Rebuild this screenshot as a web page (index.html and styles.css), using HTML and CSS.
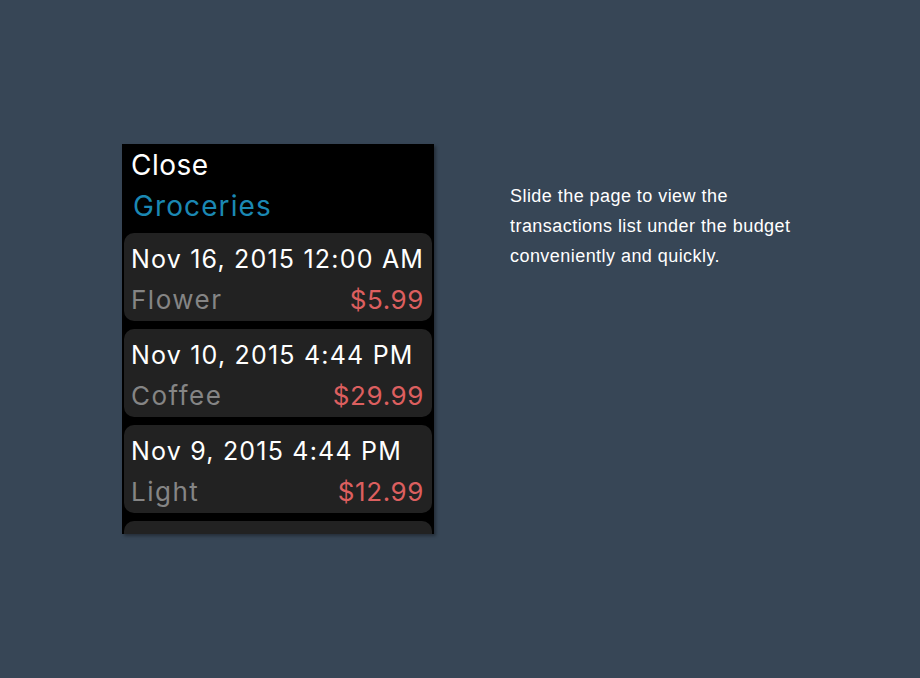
FILE: index.html
```html
<!DOCTYPE html>
<html>
<head>
<meta charset="utf-8">
<link rel="stylesheet" href="styles.css">
</head>
<body>
<div class="page">
  <div class="watch">
    <div class="close">Close</div>
    <div class="title">Groceries</div>
    <div class="list">
      <div class="card">
        <div class="date">Nov 16, 2015 12:00 AM</div>
        <div class="row"><span class="name">Flower</span><span class="amount">$5.99</span></div>
      </div>
      <div class="card">
        <div class="date">Nov 10, 2015 4:44 PM</div>
        <div class="row"><span class="name">Coffee</span><span class="amount">$29.99</span></div>
      </div>
      <div class="card">
        <div class="date">Nov 9, 2015 4:44 PM</div>
        <div class="row"><span class="name">Light</span><span class="amount">$12.99</span></div>
      </div>
      <div class="card"></div>
    </div>
  </div>
  <p class="caption">Slide the page to view the<br>transactions list under the budget<br>conveniently and quickly.</p>
</div>
</body>
</html>
```
FILE: styles.css
```css
html, body {
  margin: 0;
  padding: 0;
  background: #374656;
}
.page {
  width: 920px;
  height: 678px;
  display: flex;
  align-items: flex-start;
  padding: 144px 0 0 122px;
  box-sizing: border-box;
}
.watch {
  width: 312px;
  height: 390px;
  background: #000;
  overflow: hidden;
  box-shadow: 2px 2px 3px rgba(0, 0, 0, 0.35);
  font-family: Inter, Roboto, sans-serif;
  flex-shrink: 0;
}
.close {
  color: #fff;
  font-size: 28px;
  line-height: 38px;
  padding: 2px 0 0 9px;
  letter-spacing: 0.5px;
}
.title {
  color: #1b88b3;
  font-size: 28px;
  line-height: 38px;
  padding: 3px 0 0 11px;
  letter-spacing: 1.1px;
}
.list {
  display: flex;
  flex-direction: column;
  gap: 8px;
  padding: 8px 2px 0 2px;
}
.card {
  height: 88px;
  background: #222222;
  border-radius: 10px;
  padding: 7px 8px 0 7px;
  box-sizing: border-box;
  flex-shrink: 0;
}
.date {
  color: #fff;
  font-size: 25px;
  line-height: 38px;
  letter-spacing: 1.2px;
  white-space: nowrap;
}
.row {
  display: flex;
  justify-content: space-between;
  font-size: 26px;
  line-height: 40px;
  padding-top: 2px;
}
.name {
  color: #858585;
  letter-spacing: 1.5px;
}
.amount {
  color: #dc5f5f;
  letter-spacing: 0.6px;
}
.caption {
  margin: 37px 0 0 76px;
  color: #fff;
  font-family: "Liberation Sans", Arial, sans-serif;
  font-size: 18px;
  line-height: 30px;
  letter-spacing: 0.45px;
}
```
